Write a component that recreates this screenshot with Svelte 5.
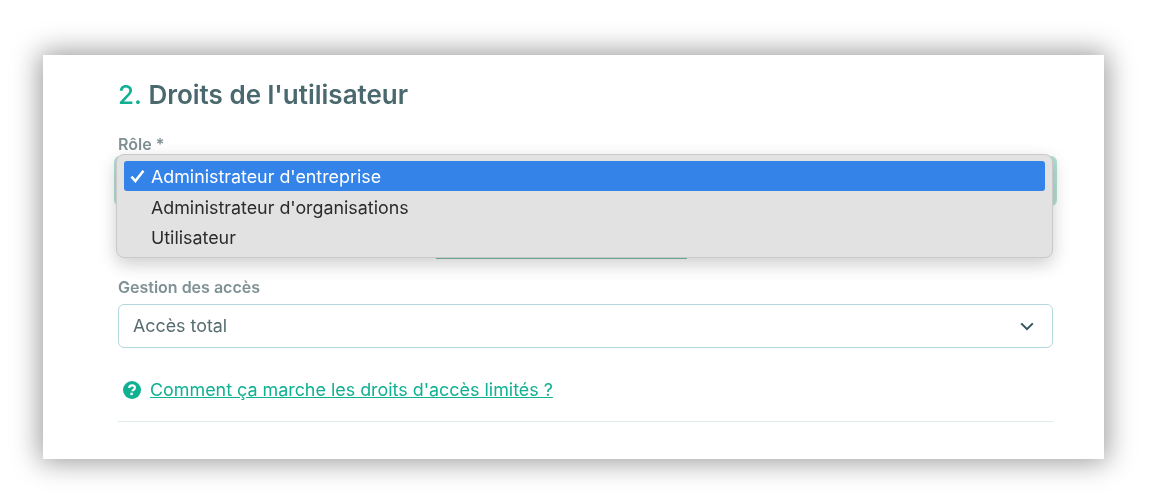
<script>
  const options = [
    { label: "Administrateur d'entreprise", selected: true },
    { label: "Administrateur d'organisations", selected: false },
    { label: 'Utilisateur', selected: false }
  ];
</script>

<div class="page">
  <section class="card">
    <h2><span class="num">2.</span> Droits de l'utilisateur</h2>

    <div class="field role">
      <div class="label">Rôle *</div>
      <div class="role-stack">
        <div class="focus-select"></div>
        <div class="teal-edge"></div>
        <div class="menu">
          {#each options as o}
            <div class="opt" class:selected={o.selected}>
              <span class="tick">
                {#if o.selected}
                  <svg width="15" height="14" viewBox="0 0 15 14"><path d="M1.4 7.6 5.4 12 13.4 1.8" fill="none" stroke="#fff" stroke-width="2.6"/></svg>
                {/if}
              </span>
              {o.label}
            </div>
          {/each}
        </div>
      </div>
    </div>

    <div class="field access">
      <div class="label">Gestion des accès</div>
      <div class="select">
        <span class="value">Accès total</span>
        <svg width="14" height="9" viewBox="0 0 14 9"><path d="M1.2 1.4 7 7.2 12.8 1.4" fill="none" stroke="#34535c" stroke-width="2"/></svg>
      </div>
    </div>

    <div class="help">
      <svg width="18" height="18" viewBox="0 0 18 18">
        <circle cx="9" cy="9" r="9" fill="#10b092"/>
        <path d="M6.2 7.1c0-1.7 1.2-2.7 2.9-2.7 1.6 0 2.8 1 2.8 2.4 0 1.2-.7 1.7-1.5 2.2-.6.4-.9.6-.9 1.3" fill="none" stroke="#fff" stroke-width="2.2"/>
        <rect x="7.4" y="11.7" width="2.4" height="2.4" fill="#fff"/>
      </svg>
      <a href="#help" onclick={(e) => e.preventDefault()}>Comment ça marche les droits d'accès limités ?</a>
    </div>

    <hr />
  </section>
</div>

<style>
  :global(body) {
    margin: 0;
    background: #fff;
  }
  .page {
    width: 1150px;
    height: 500px;
    overflow: hidden;
    padding: 55px 46px 0 42.5px;
    box-sizing: border-box;
    font-family: Inter, "Liberation Sans", sans-serif;
    filter: blur(0.45px);
  }
  .card {
    width: 1061.5px;
    height: 404px;
    box-sizing: border-box;
    padding: 24px 51px 0 75.5px;
    background: #fff;
    box-shadow: 0 0 26px 3px rgba(0, 0, 0, 0.4);
  }
  h2 {
    margin: 0;
    font-size: 26px;
    line-height: 32px;
    font-weight: 600;
    color: #4a696e;
  }
  .num {
    color: #10b092;
    font-weight: 500;
  }
  .label {
    font-size: 16px;
    line-height: 18px;
    font-weight: 600;
    color: #7f9194;
  }
  .role {
    margin-top: 24px;
  }
  .role-stack {
    position: relative;
    height: 125px;
  }
  .focus-select {
    position: absolute;
    left: -4px;
    right: -4px;
    top: 3px;
    height: 50px;
    border-radius: 6px;
    background: #b4e0d4;
  }
  .teal-edge {
    position: absolute;
    left: 318px;
    width: 251px;
    top: 104px;
    height: 2px;
    background: #7dbfae;
  }
  .menu {
    position: absolute;
    left: -2px;
    right: 0;
    top: 1px;
    height: 104px;
    box-sizing: border-box;
    padding: 6px 7px 0;
    border: 1px solid #c9c9c9;
    border-radius: 8px;
    background: #e2e2e2;
    box-shadow: 0 6px 18px rgba(0, 0, 0, 0.2);
  }
  .opt {
    display: flex;
    align-items: center;
    height: 30px;
    border-radius: 3px;
    font-size: 17.85px;
    color: #2b2b2b;
  }
  .opt.selected {
    background: #3483e8;
    color: #fff;
    margin-bottom: 1px;
  }
  .tick {
    display: flex;
    justify-content: center;
    width: 27px;
    flex: none;
  }
  .access .label {
    margin-bottom: 8px;
  }
  .select {
    display: flex;
    align-items: center;
    justify-content: space-between;
    height: 44px;
    box-sizing: border-box;
    padding: 0 18px 0 14px;
    border: 1px solid #b5d8de;
    border-radius: 6px;
    font-size: 17.85px;
    color: #566c70;
  }
  .value {
    margin-top: -2px;
  }
  .help {
    display: flex;
    align-items: center;
    gap: 9px;
    margin-top: 32px;
    padding-left: 5px;
  }
  .help a {
    font-size: 17.9px;
    line-height: 20px;
    color: #10b092;
  }
  hr {
    margin: 21px 0 0;
    border: 0;
    border-top: 1px solid #dfeaea;
  }
</style>
